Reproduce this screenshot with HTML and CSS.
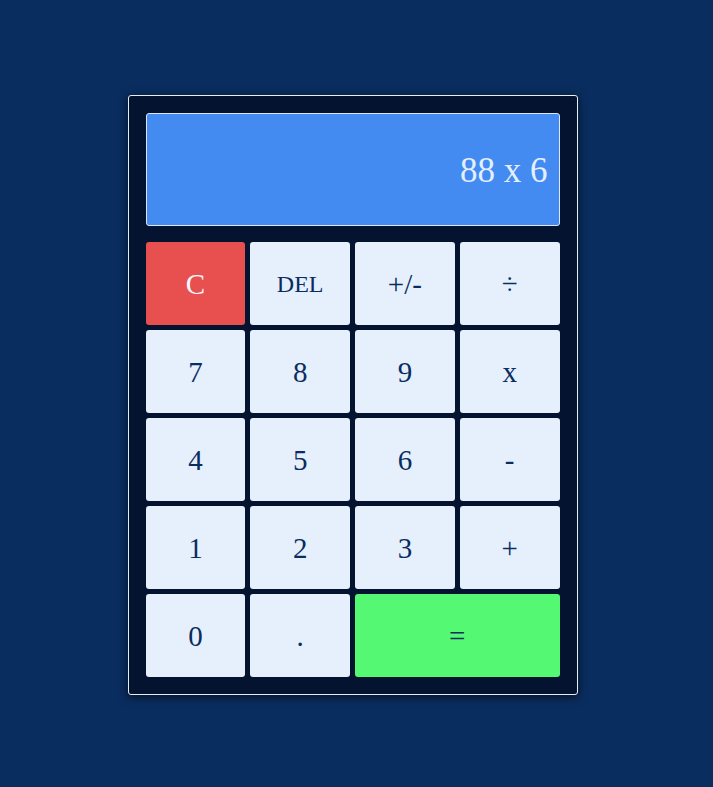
FILE: index.html
```html
<!DOCTYPE html>
<html>
<head>
<meta charset="utf-8">
<link rel="stylesheet" href="styles.css">
</head>
<body>
<div class="calc">
  <div class="display">88 x 6</div>
  <div class="keys">
    <button class="key clear">C</button>
    <button class="key small">DEL</button>
    <button class="key">+/-</button>
    <button class="key">÷</button>
    <button class="key">7</button>
    <button class="key">8</button>
    <button class="key">9</button>
    <button class="key">x</button>
    <button class="key">4</button>
    <button class="key">5</button>
    <button class="key">6</button>
    <button class="key">-</button>
    <button class="key">1</button>
    <button class="key">2</button>
    <button class="key">3</button>
    <button class="key">+</button>
    <button class="key">0</button>
    <button class="key">.</button>
    <button class="key equals">=</button>
  </div>
</div>
</body>
</html>
```
FILE: styles.css
```css
html, body {
  margin: 0;
  padding: 0;
}
body {
  background: #0a2d5f;
  min-height: 787px;
  display: flex;
  justify-content: center;
  align-items: flex-start;
  padding-top: 95px;
  padding-right: 8px;
  box-sizing: border-box;
  font-family: "Liberation Serif", "Times New Roman", serif;
}
.calc {
  width: 450px;
  box-sizing: border-box;
  background: #031330;
  border: 1px solid #e6eef8;
  border-radius: 3px;
  padding: 17px;
  box-shadow: 0 2px 10px rgba(0, 0, 0, 0.65);
}
.display {
  height: 113px;
  box-sizing: border-box;
  background: #438bf0;
  border: 1px solid #dbe7f7;
  border-radius: 3px;
  display: flex;
  align-items: center;
  justify-content: flex-end;
  padding: 3px 11px 0 0;
  color: #e4efff;
  font-size: 35px;
}
.keys {
  margin-top: 16px;
  display: grid;
  grid-template-columns: repeat(4, 1fr);
  grid-auto-rows: 83px;
  gap: 5px;
}
.key {
  border: none;
  border-radius: 3px;
  background: #e6f0fd;
  color: #0a2d5f;
  font-family: "Liberation Serif", "Times New Roman", serif;
  font-size: 29px;
  padding: 1px 0 0;
  margin: 0;
}
.key.small {
  font-size: 24px;
}
.key.clear {
  background: #e85050;
  color: #f4f6ff;
}
.key.equals {
  grid-column: span 2;
  background: #55f872;
}
```
